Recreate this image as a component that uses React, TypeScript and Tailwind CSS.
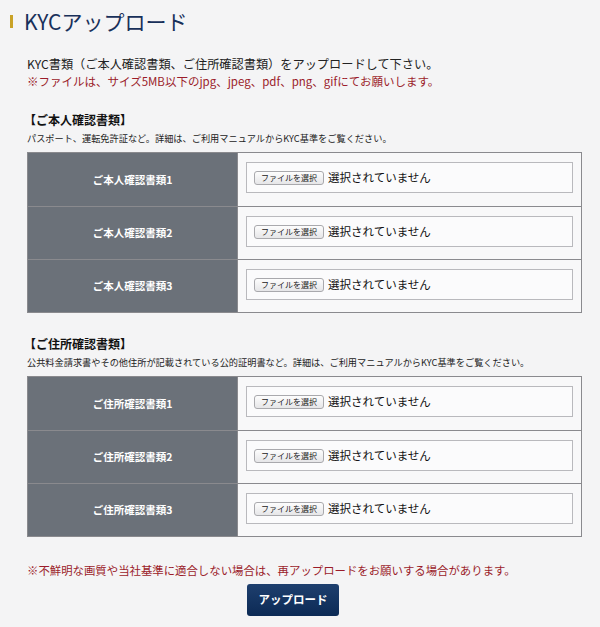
import React from 'react';

const jp = "font-['Noto_Sans_CJK_JP','Noto_Sans',sans-serif]";

const FileField: React.FC = () => (
    <div className="flex h-[31px] items-center border border-[#b9b9bd] bg-[#fbfbfc] pl-[7px]">
        <button
            type="button"
            className="flex h-[14px] items-center rounded-[3px] border border-[#a9a9ad] bg-gradient-to-b from-[#fdfdfd] to-[#e6e6e8] px-[6px] text-[8px] leading-none text-[#222]"
        >
            ファイルを選択
        </button>
        <span className="ml-[4px] text-[11.5px] text-[#111]">選択されていません</span>
    </div>
);

const DocTable: React.FC<{ labels: string[] }> = ({ labels }) => (
    <div className="ml-[27px] mr-[18px] border border-[#8a8a8e]">
        {labels.map((label, i) => (
            <div key={label} className={`flex h-[53px] ${i > 0 ? 'border-t border-[#8a8a8e]' : ''}`}>
                <div className="flex w-[210px] items-center justify-center border-r border-[#8a8a8e] bg-[#6b7179] text-[10.5px] font-bold text-white">
                    {label}
                </div>
                <div className="flex-1 bg-[#f8f8f9] px-[8px] pt-[9px]">
                    <FileField />
                </div>
            </div>
        ))}
    </div>
);

const App: React.FC = () => {
    return (
        <div className={`h-[627px] w-[600px] bg-[#f4f4f5] ${jp}`}>
            <div className="flex items-center pt-[6px] pl-[10px]">
                <span className="h-[13px] w-[3px] bg-[#c9a227]" />
                <h1 className="ml-[11px] text-[21px] leading-[30px] text-[#18305a]">KYCアップロード</h1>
            </div>

            <div className="mt-[20px] px-[27px] leading-[17px]">
                <p className="text-[12.2px] text-[#222]">KYC書類（ご本人確認書類、ご住所確認書類）をアップロードして下さい。</p>
                <p className="text-[11.5px] text-[#9b1c2a]">※ファイルは、サイズ5MB以下のjpg、jpeg、pdf、png、gifにてお願いします。</p>
            </div>

            <div className="mt-[22px] pl-[24px]">
                <h2 className="text-[12px] leading-[16px] font-bold text-[#111]">【ご本人確認書類】</h2>
                <p className="mt-[3px] pl-[3px] text-[9.2px] leading-[14px] text-[#222]">
                    パスポート、運転免許証など。詳細は、ご利用マニュアルからKYC基準をご覧ください。
                </p>
            </div>
            <div className="mt-[7px]">
                <DocTable labels={['ご本人確認書類1', 'ご本人確認書類2', 'ご本人確認書類3']} />
            </div>

            <div className="mt-[23px] pl-[24px]">
                <h2 className="text-[12px] leading-[16px] font-bold text-[#111]">【ご住所確認書類】</h2>
                <p className="mt-[3px] pl-[3px] text-[9.2px] leading-[14px] text-[#222]">
                    公共料金請求書やその他住所が記載されている公的証明書など。詳細は、ご利用マニュアルからKYC基準をご覧ください。
                </p>
            </div>
            <div className="mt-[7px]">
                <DocTable labels={['ご住所確認書類1', 'ご住所確認書類2', 'ご住所確認書類3']} />
            </div>

            <p className="mt-[25px] pl-[27px] text-[11.4px] leading-[16px] text-[#9b1c2a]">
                ※不鮮明な画質や当社基準に適合しない場合は、再アップロードをお願いする場合があります。
            </p>
            <div className="mt-[6px] flex justify-center pr-[14px]">
                <button
                    type="button"
                    className="h-[32px] w-[92px] rounded-[3px] bg-gradient-to-b from-[#1e3f6e] to-[#0c2a55] text-[11.5px] font-bold text-white"
                >
                    アップロード
                </button>
            </div>
        </div>
    );
};

export default App;
